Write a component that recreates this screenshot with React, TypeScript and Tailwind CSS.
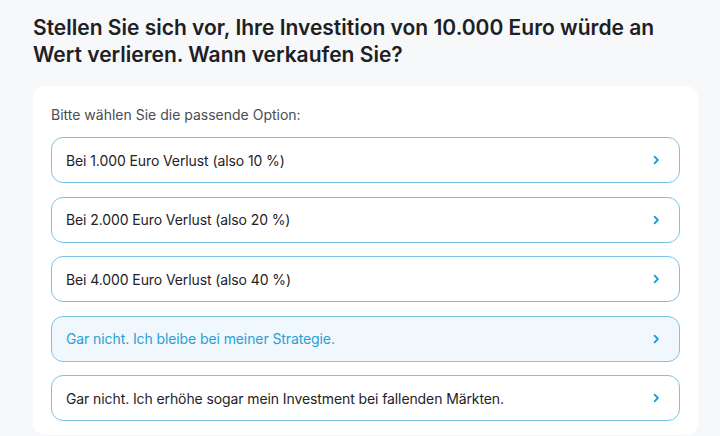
import React from 'react'

const options = [
  { label: 'Bei 1.000 Euro Verlust (also 10 %)', selected: false },
  { label: 'Bei 2.000 Euro Verlust (also 20 %)', selected: false },
  { label: 'Bei 4.000 Euro Verlust (also 40 %)', selected: false },
  { label: 'Gar nicht. Ich bleibe bei meiner Strategie.', selected: true },
  { label: 'Gar nicht. Ich erhöhe sogar mein Investment bei fallenden Märkten.', selected: false },
]

const Chevron = () => (
  <svg width="10" height="10" viewBox="0 0 10 10" fill="none">
    <path d="M3.6 1.7 L6.9 5 L3.6 8.3" stroke="#1a9ad6" strokeWidth="1.8" strokeLinecap="round" strokeLinejoin="round" />
  </svg>
)

const App = () => {
  return (
    <div className="w-[720px] h-[436px] overflow-hidden bg-[#f7f8fa] font-['Inter',sans-serif]">
      {/* Question */}
      <h1 className="pt-[14px] pl-[33px] pr-[40px] text-[21px] font-semibold leading-[27px] text-[#1d2024]">
        Stellen Sie sich vor, Ihre Investition von 10.000 Euro würde an Wert verlieren. Wann verkaufen Sie?
      </h1>
      {/* Card */}
      <section className="mt-[18px] ml-[33px] w-[665px] bg-white rounded-[12px] px-[18px] pt-[19px] pb-[14px] flex flex-col">
        <p className="text-[14px] leading-[20px] text-[#4a4d52] mb-[12px]">Bitte wählen Sie die passende Option:</p>
        <div className="flex flex-col gap-[13.5px]">
          {options.map((o) => (
            <button
              key={o.label}
              className={`h-[46px] w-full flex items-center justify-between pl-[14px] pr-[18px] rounded-[12px] border border-[#7cc3e7] text-left text-[14px] tracking-[-0.1px] ${o.selected ? 'bg-[#f0f8fd] text-[#2a9fd8]' : 'bg-white text-[#1f2226]'}`}
            >
              <span>{o.label}</span>
              <Chevron />
            </button>
          ))}
        </div>
      </section>
    </div>
  )
}

export default App
